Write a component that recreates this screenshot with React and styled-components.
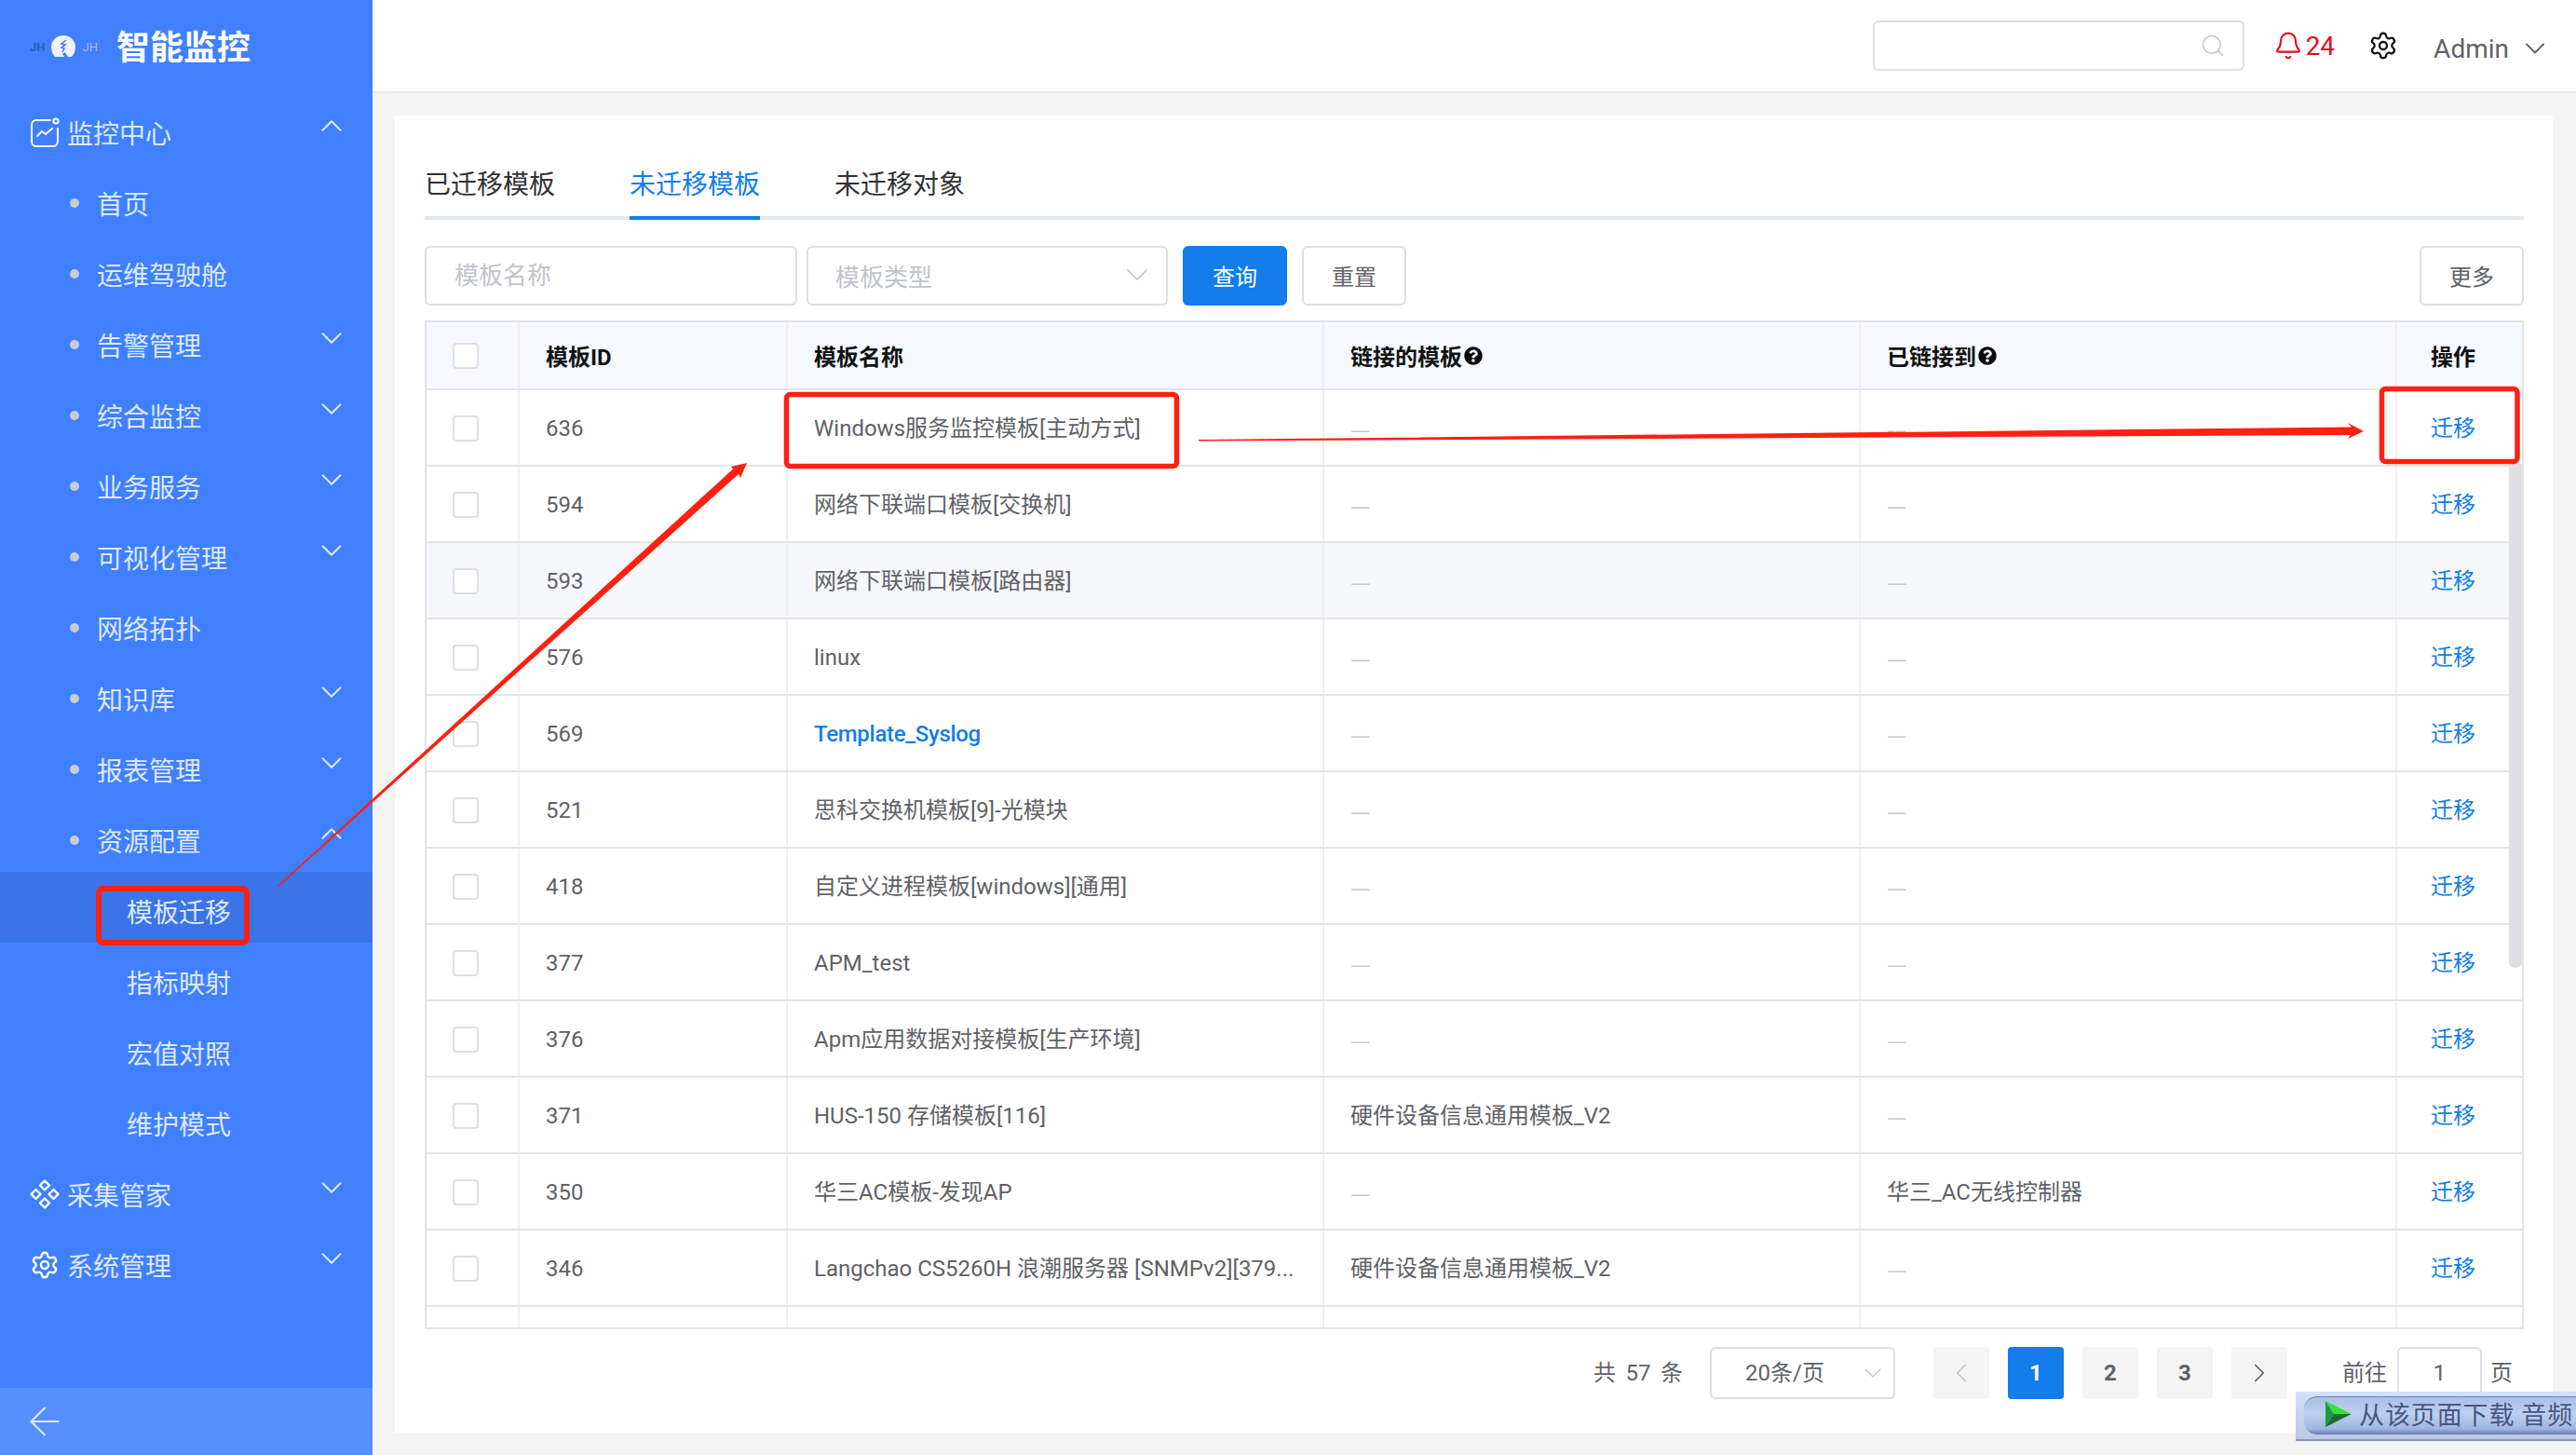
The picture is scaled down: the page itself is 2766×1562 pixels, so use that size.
import React from 'react';
import styled, { createGlobalStyle } from 'styled-components';
import { Search, Bell, Settings, ArrowLeft, ChevronDown, ChevronUp, ChevronLeft, ChevronRight } from 'lucide-react';
import { FaQuestionCircle } from 'react-icons/fa';

const GlobalStyle = createGlobalStyle`
    html, body {
        margin: 0;
        padding: 0;
        background: #f4f4f4;
        overflow: hidden;
    }
    * {
        box-sizing: border-box;
    }
    body {
        font-family: Roboto, "Noto Sans CJK SC", sans-serif;
    }
`;

const Page = styled.div`
    position: relative;
    display: flex;
    width: 2766px;
    height: 1562px;
    overflow: hidden;
`;

/* sidebar */
const Sidebar = styled.aside`
    display: flex;
    flex-direction: column;
    width: 400px;
    flex: none;
    background: #4080ff;
    color: #dce8ff;
`;

const Logo = styled.div`
    display: flex;
    align-items: center;
    height: 100px;
    padding-left: 32px;
`;

const LogoMark = styled.span`
    font-size: 13px;
    line-height: 1;
    font-weight: ${(props) => (props.$faint ? 400 : 700)};
    color: ${(props) => (props.$faint ? '#a9bbdc' : '#1b6aa5')};
`;

const LogoGlobe = styled.svg`
    width: 26px;
    height: 24px;
    margin: 0 7px 0 7px;
`;

const LogoTitle = styled.div`
    margin-left: 20px;
    padding-top: 3px;
    font-size: 36px;
    font-weight: 700;
    color: #ffffff;
    line-height: 1;
`;

const MenuItem = styled.div`
    display: flex;
    align-items: center;
    height: 76px;
    padding-top: 7px;
    padding-left: ${(props) => [32, 75, 136][props.$level]}px;
    padding-right: 25px;
    font-size: 28px;
    background: ${(props) => (props.$active ? '#3b74e6' : 'transparent')};
`;

const MenuIcon = styled.svg`
    width: 32px;
    height: 32px;
    margin-right: 8px;
    flex: none;
    color: #ffffff;
`;

const Bullet = styled.i`
    display: block;
    width: 10px;
    height: 10px;
    margin-right: 19px;
    border-radius: 50%;
    background: #c9ccd4;
`;

const MenuLabel = styled.span`
    flex: 1;
`;

const SideChevron = styled.span`
    display: flex;
    margin-bottom: 14px;
    color: #dce8ff;
`;

const Collapse = styled.div`
    display: flex;
    align-items: center;
    height: 72px;
    margin-top: auto;
    padding-left: 23px;
    background: #558fff;
    color: #dce8ff;
`;

/* header */
const Main = styled.div`
    display: flex;
    flex-direction: column;
    flex: 1;
    min-width: 0;
`;

const Header = styled.header`
    display: flex;
    align-items: center;
    justify-content: flex-end;
    height: 100px;
    flex: none;
    padding-right: 26px;
    background: #ffffff;
    border-bottom: 2px solid #e8e8e8;
`;

const SearchBox = styled.div`
    display: flex;
    align-items: center;
    justify-content: flex-end;
    width: 399px;
    height: 54px;
    padding-right: 18px;
    border: 2px solid #dcdfe6;
    border-radius: 6px;
    color: #c0c4cc;
`;

const Alarm = styled.div`
    display: flex;
    align-items: center;
    gap: 3px;
    margin-left: 31px;
    font-size: 28px;
    color: #e60b23;
`;

const GearBtn = styled.div`
    display: flex;
    margin-left: 36px;
    color: #111111;
`;

const UserMenu = styled.div`
    display: flex;
    align-items: center;
    gap: 10px;
    margin-left: 38px;
    padding-top: 6px;
    font-size: 28px;
    color: #606266;
`;

/* content card */
const Content = styled.div`
    flex: 1;
    padding: 24px 25px 24px 24px;
    min-height: 0;
`;

const Card = styled.section`
    display: flex;
    flex-direction: column;
    height: 100%;
    padding: 32px 31px 0 32px;
    background: #ffffff;
`;

const Tabs = styled.div`
    display: flex;
    gap: 80px;
    height: 80px;
    flex: none;
    border-bottom: 4px solid #e4e7ed;
`;

const Tab = styled.div`
    display: flex;
    align-items: center;
    height: 80px;
    padding-top: 4px;
    font-size: 28px;
    color: ${(props) => (props.$active ? '#127deb' : '#303133')};
    border-bottom: 4px solid ${(props) => (props.$active ? '#127deb' : 'transparent')};
`;

const Toolbar = styled.div`
    display: flex;
    align-items: stretch;
    height: 64px;
    margin-top: 28px;
    flex: none;
`;

const NameInput = styled.input`
    width: 400px;
    padding: 0 30px;
    font-family: inherit;
    font-size: 26px;
    color: #606266;
    border: 2px solid #dcdfe6;
    border-radius: 6px;
    outline: none;
    background: #ffffff;
    &::placeholder {
        color: #c0c4cc;
    }
`;

const TypeSelect = styled.div`
    display: flex;
    align-items: center;
    justify-content: space-between;
    width: 388px;
    margin-left: 10px;
    padding: 0 11px 2px 29px;
    font-size: 26px;
    color: #c0c4cc;
    border: 2px solid #dcdfe6;
    border-radius: 6px;
`;

const Btn = styled.button`
    width: ${(props) => props.$w || 112}px;
    margin-left: ${(props) => props.$ml || 0}px;
    padding: 0 0 2px;
    font-family: inherit;
    font-size: 24px;
    color: ${(props) => (props.$primary ? '#ffffff' : '#606266')};
    background: ${(props) => (props.$primary ? '#127deb' : '#ffffff')};
    border: ${(props) => (props.$primary ? 'none' : '2px solid #dcdfe6')};
    border-radius: 6px;
`;

/* table */
const TableWrap = styled.div`
    display: flex;
    flex-direction: column;
    height: 1083px;
    margin-top: 16px;
    flex: none;
    border: 2px solid #e4e4e4;
    overflow: hidden;
`;

const columns = '100px 288px 576px 576px 576px 120px';

const HeadRow = styled.div`
    display: grid;
    grid-template-columns: ${columns} 1fr;
    height: 73px;
    flex: none;
    background: #f5f8ff;
    border-bottom: 2px solid #e2e4e8;
`;

const HeadCell = styled.div`
    display: flex;
    align-items: center;
    justify-content: ${(props) => (props.$center ? 'center' : 'flex-start')};
    gap: 2px;
    padding: 0 ${(props) => (props.$center ? 0 : 28)}px;
    font-size: 24px;
    font-weight: 700;
    color: #111111;
    border-right: ${(props) => (props.$plain ? 'none' : '2px solid #eeeff2')};
`;

const TableBody = styled.div`
    position: relative;
    flex: 1;
    min-height: 0;
    overflow: hidden;
`;

const Row = styled.div`
    display: grid;
    grid-template-columns: ${columns};
    height: 82px;
    background: ${(props) => (props.$hover ? '#f5f7fa' : '#ffffff')};
    border-bottom: 2px solid #e4e4e4;
`;

const Cell = styled.div`
    display: flex;
    align-items: center;
    justify-content: ${(props) => (props.$center ? 'center' : 'flex-start')};
    min-width: 0;
    padding: 2px ${(props) => (props.$center ? 0 : 28)}px 0;
    font-size: 24px;
    line-height: 32px;
    white-space: nowrap;
    overflow: hidden;
    color: ${(props) => (props.$link ? '#127deb' : props.$dash ? '#c8c8c8' : '#606266')};
    font-weight: ${(props) => (props.$link === 'bold' ? 500 : 400)};
    letter-spacing: ${(props) => (props.$link === 'bold' ? '-0.3px' : 'normal')};
    font-family: ${(props) => (props.$dash ? '"Noto Sans CJK SC", sans-serif' : 'inherit')};
    border-right: ${(props) => (props.$plain ? 'none' : '2px solid #f0f0f0')};
`;

const Check = styled.span`
    display: block;
    width: 28px;
    height: 28px;
    background: #ffffff;
    border: 2px solid #dcdfe6;
    border-radius: 4px;
`;

const ScrollThumb = styled.div`
    position: absolute;
    top: 79px;
    right: 0;
    width: 14px;
    height: 541px;
    background: #dddfe2;
    border-radius: 0 0 6px 6px;
`;

/* pagination */
const Pager = styled.div`
    display: flex;
    align-items: center;
    height: 56px;
    margin-top: 19px;
    flex: none;
    font-size: 24px;
    line-height: 32px;
    color: #606266;
`;

const Total = styled.span`
    margin-left: 1255px;
    width: 125px;
    word-spacing: 4.5px;
`;

const SizeSelect = styled.div`
    display: flex;
    align-items: center;
    justify-content: space-between;
    width: 199px;
    height: 56px;
    padding: 0 6px 0 36px;
    border: 2px solid #dcdfe6;
    border-radius: 6px;
    color: #606266;
`;

const PageBtn = styled.div`
    display: flex;
    align-items: center;
    justify-content: center;
    width: 60px;
    height: 56px;
    margin-left: ${(props) => props.$ml ?? 20}px;
    font-weight: 700;
    border-radius: 4px;
    background: ${(props) => (props.$active ? '#127deb' : '#f4f4f5')};
    color: ${(props) => (props.$active ? '#ffffff' : props.$off ? '#c0c4cc' : '#606266')};
`;

const JumpLabel = styled.span`
    margin-left: ${(props) => props.$ml}px;
`;

const JumpInput = styled.div`
    display: flex;
    align-items: center;
    justify-content: center;
    width: 91px;
    height: 56px;
    margin: 0 9px 0 11px;
    border: 2px solid #dcdfe6;
    border-radius: 6px;
`;

/* browser extension bar lying over the page */
const DownloadBar = styled.div`
    position: absolute;
    left: 2465px;
    top: 1494px;
    width: 301px;
    height: 53px;
    padding: 5px 0 5px 9px;
    overflow: hidden;
    background: linear-gradient(#d3e1fb, #b9c9e2);
    border-bottom: 2px solid #8793b0;
`;

const DownloadPill = styled.div`
    display: flex;
    align-items: center;
    width: 320px;
    height: 41px;
    padding: 0 0 5px 23px;
    white-space: nowrap;
    font-size: 27px;
    letter-spacing: 0.9px;
    color: #4a5680;
    border-radius: 14px 0 0 14px;
    border-top: 1px solid #6c7fac;
    background: linear-gradient(#a9bfe6 0%, #bcd0f0 45%, #9fb6dd 85%, #6478ae 100%);
    font-family: "Noto Sans CJK SC", sans-serif;
`;

const PlayIcon = styled.svg`
    width: 28px;
    height: 28px;
    margin-right: 8px;
    flex: none;
`;

/* red marks drawn on top of the screenshot */
const Marks = styled.svg`
    position: absolute;
    left: 0;
    top: 0;
    pointer-events: none;
`;

const menu = [
    { label: '监控中心', level: 0, icon: 'chart', open: true },
    { label: '首页', level: 1 },
    { label: '运维驾驶舱', level: 1 },
    { label: '告警管理', level: 1, more: true },
    { label: '综合监控', level: 1, more: true },
    { label: '业务服务', level: 1, more: true },
    { label: '可视化管理', level: 1, more: true },
    { label: '网络拓扑', level: 1 },
    { label: '知识库', level: 1, more: true },
    { label: '报表管理', level: 1, more: true },
    { label: '资源配置', level: 1, open: true },
    { label: '模板迁移', level: 2, active: true },
    { label: '指标映射', level: 2 },
    { label: '宏值对照', level: 2 },
    { label: '维护模式', level: 2 },
    { label: '采集管家', level: 0, icon: 'diamonds', more: true },
    { label: '系统管理', level: 0, icon: 'gear', more: true },
];

const rows = [
    ['636', 'Windows服务监控模板[主动方式]', '—', '—'],
    ['594', '网络下联端口模板[交换机]', '—', '—'],
    ['593', '网络下联端口模板[路由器]', '—', '—'],
    ['576', 'linux', '—', '—'],
    ['569', 'Template_Syslog', '—', '—'],
    ['521', '思科交换机模板[9]-光模块', '—', '—'],
    ['418', '自定义进程模板[windows][通用]', '—', '—'],
    ['377', 'APM_test', '—', '—'],
    ['376', 'Apm应用数据对接模板[生产环境]', '—', '—'],
    ['371', 'HUS-150 存储模板[116]', '硬件设备信息通用模板_V2', '—'],
    ['350', '华三AC模板-发现AP', '—', '华三_AC无线控制器'],
    ['346', 'Langchao CS5260H 浪潮服务器 [SNMPv2][379...', '硬件设备信息通用模板_V2', '—'],
];

const MenuGlyph = ({ kind }) => {
    if (kind === 'chart') {
        return (
            <MenuIcon viewBox="0 0 32 32" fill="none" stroke="currentColor" strokeWidth="2" strokeLinecap="round" strokeLinejoin="round">
                <path d="M22 3H7a5 5 0 0 0-5 5v18a5 5 0 0 0 5 5h18a5 5 0 0 0 5-5V12" />
                <circle cx="28" cy="4" r="2.6" />
                <path d="M8 20l5-5 4 3 7-6" />
            </MenuIcon>
        );
    }
    if (kind === 'diamonds') {
        return (
            <MenuIcon viewBox="0 0 32 32" fill="none" stroke="currentColor" strokeWidth="2.4" strokeLinejoin="round">
                <path d="M16 1.5l5 5-5 5-5-5z" />
                <path d="M6.5 11l5 5-5 5-5-5z" />
                <path d="M25.5 11l5 5-5 5-5-5z" />
                <path d="M16 20.5l5 5-5 5-5-5z" />
            </MenuIcon>
        );
    }
    return (
        <MenuIcon as={Settings} size={32} strokeWidth={1.8} />
    );
};

const Help = () => <FaQuestionCircle size={20} color="#0a0a0a" />;

const App = () => {
    return (
        <Page>
            <GlobalStyle />
            <Sidebar>
                <Logo>
                    <LogoMark>JH</LogoMark>
                    <LogoGlobe viewBox="0 0 26 24">
                        <path d="M13 0a13 12.5 0 0 1 13 12.5c0 4-1.5 8-4 10.500h-4l-3-4.500-3 1 2 3.500H4c-2.500-2.500-4-6.500-4-10.500A13 12.500 0 0 1 13 0z" fill="#f1f1f4" />
                        <path d="M16 5l-5 4 4 1-4 3 3 1-2 4" fill="none" stroke="#4080ff" strokeWidth="1.600" />
                    </LogoGlobe>
                    <LogoMark $faint>JH</LogoMark>
                    <LogoTitle>智能监控</LogoTitle>
                </Logo>
                {menu.map((item) => (
                    <MenuItem key={item.label} $level={item.level} $active={item.active}>
                        {item.icon && <MenuGlyph kind={item.icon} />}
                        {item.level === 1 && <Bullet />}
                        <MenuLabel>{item.label}</MenuLabel>
                        {item.more && (
                            <SideChevron>
                                <ChevronDown size={38} strokeWidth={1.3} />
                            </SideChevron>
                        )}
                        {item.open && (
                            <SideChevron>
                                <ChevronUp size={38} strokeWidth={1.3} />
                            </SideChevron>
                        )}
                    </MenuItem>
                ))}
                <Collapse>
                    <ArrowLeft size={50} strokeWidth={1} />
                </Collapse>
            </Sidebar>
            <Main>
                <Header>
                    <SearchBox>
                        <Search size={28} strokeWidth={1.3} />
                    </SearchBox>
                    <Alarm>
                        <Bell size={32} strokeWidth={1.6} />
                        24
                    </Alarm>
                    <GearBtn>
                        <Settings size={32} strokeWidth={1.7} />
                    </GearBtn>
                    <UserMenu>
                        Admin
                        <ChevronDown size={36} strokeWidth={1.2} />
                    </UserMenu>
                </Header>
                <Content>
                    <Card>
                        <Tabs>
                            <Tab>已迁移模板</Tab>
                            <Tab $active>未迁移模板</Tab>
                            <Tab>未迁移对象</Tab>
                        </Tabs>
                        <Toolbar>
                            <NameInput placeholder="模板名称" />
                            <TypeSelect>
                                模板类型
                                <ChevronDown size={40} strokeWidth={1} />
                            </TypeSelect>
                            <Btn $primary $ml={16}>查询</Btn>
                            <Btn $ml={16}>重置</Btn>
                            <Btn $ml={1088}>更多</Btn>
                        </Toolbar>
                        <TableWrap>
                            <HeadRow>
                                <HeadCell><Check /></HeadCell>
                                <HeadCell>模板ID</HeadCell>
                                <HeadCell>模板名称</HeadCell>
                                <HeadCell>链接的模板<Help /></HeadCell>
                                <HeadCell>已链接到<Help /></HeadCell>
                                <HeadCell $center $plain>操作</HeadCell>
                                <HeadCell $plain />
                            </HeadRow>
                            <TableBody>
                                {rows.map((row, i) => (
                                    <Row key={row[0]} $hover={i === 2}>
                                        <Cell><Check /></Cell>
                                        <Cell>{row[0]}</Cell>
                                        <Cell $link={row[1] === 'Template_Syslog' ? 'bold' : undefined}>{row[1]}</Cell>
                                        <Cell $dash={row[2] === '—'}>{row[2]}</Cell>
                                        <Cell $dash={row[3] === '—'}>{row[3]}</Cell>
                                        <Cell $center $plain $link="plain">迁移</Cell>
                                    </Row>
                                ))}
                                <Row>
                                    <Cell /><Cell /><Cell /><Cell /><Cell /><Cell $plain />
                                </Row>
                                <ScrollThumb />
                            </TableBody>
                        </TableWrap>
                        <Pager>
                            <Total>共 57 条</Total>
                            <SizeSelect>
                                20条/页
                                <ChevronDown size={32} strokeWidth={0.9} color="#c0c4cc" />
                            </SizeSelect>
                            <PageBtn $off $ml={41}><ChevronLeft size={34} strokeWidth={1.2} /></PageBtn>
                            <PageBtn $active>1</PageBtn>
                            <PageBtn>2</PageBtn>
                            <PageBtn>3</PageBtn>
                            <PageBtn><ChevronRight size={34} strokeWidth={1.2} /></PageBtn>
                            <JumpLabel $ml={59}>前往</JumpLabel>
                            <JumpInput>1</JumpInput>
                            <span>页</span>
                        </Pager>
                    </Card>
                </Content>
            </Main>
            <Marks width="2766" height="1562" viewBox="0 0 2766 1562">
                <g fill="none" stroke="#fe2011" strokeLinejoin="round">
                    <rect x="844.500" y="423.500" width="419" height="77" rx="4" strokeWidth="5.500" />
                    <rect x="2557.500" y="417.500" width="145.500" height="78" rx="4" strokeWidth="5.500" />
                    <rect x="106" y="954" width="159" height="58" rx="5" strokeWidth="6" />
                </g>
                <g fill="#fe2011">
                    <polygon points="1287,472 2525,458.500 2521,454 2538,463 2521,471 2524,467 1287,473.500" />
                    <polygon points="298,951 787,503.500 785,501 802,497 795,513 793,509 299,952" />
                </g>
            </Marks>
            <DownloadBar>
                <DownloadPill>
                    <PlayIcon viewBox="0 0 28 28">
                        <polygon points="0,0 28,14 9,14" fill="#2fe53a" />
                        <polygon points="0,0 9,14 0,28" fill="#1f9c3c" />
                        <polygon points="0,28 9,14 28,14" fill="#1c6b35" />
                    </PlayIcon>
                    从该页面下载 音频
                </DownloadPill>
            </DownloadBar>
        </Page>
    );
};

export default App;
